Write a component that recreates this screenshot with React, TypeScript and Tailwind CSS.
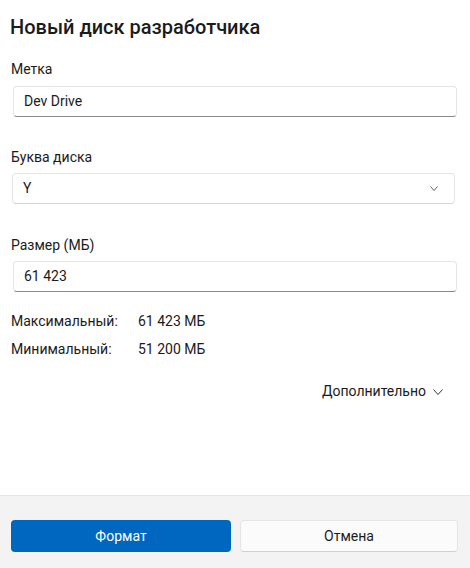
const font = { fontFamily: 'Roboto, "Noto Sans", sans-serif' };

const Chevron = ({ w, h, className }: { w: number; h: number; className?: string }) => (
  <svg width={w} height={h} viewBox={`0 0 ${w} ${h}`} fill="none" className={className}>
    <polyline points={`0.5,0.5 ${w / 2},${h - 0.5} ${w - 0.5},0.5`} stroke="currentColor" strokeWidth="1" />
  </svg>
);

const TextBox = ({ value }: { value: string }) => (
  <div className="ml-[13px] flex h-[31px] w-[444px] items-center rounded-[4px] border border-[#e5e5e5] border-b-[#8a8a8a] bg-white px-[10px] text-[14px] text-[#1b1b1b]">
    {value}
  </div>
);

const App = () => {
  return (
    <div style={font} className="flex h-[568px] w-[470px] flex-col bg-white text-[#1b1b1b]">
      <div className="flex flex-1 flex-col pt-[13px]">
        <h1 className="ml-[10px] text-[20px] font-medium leading-[28px]">Новый диск разработчика</h1>

        <div className="ml-[11px] mt-[18px] text-[14px] leading-[20px]">Метка</div>
        <div className="mt-[7px]">
          <TextBox value="Dev Drive" />
        </div>

        <div className="ml-[11px] mt-[30px] text-[14px] leading-[20px]">Буква диска</div>
        <div className="ml-[12px] mt-[6px] flex h-[31px] w-[443px] items-center justify-between rounded-[4px] border border-[#e5e5e5] border-b-[#d4d4d4] bg-white pl-[10px] pr-[16px] text-[14px]">
          <span>Y</span>
          <Chevron w={8} h={5} className="text-[#606060]" />
        </div>

        <div className="ml-[11px] mt-[31px] text-[14px] leading-[20px]">Размер (МБ)</div>
        <div className="mt-[6px]">
          <TextBox value="61 423" />
        </div>

        <div className="ml-[11px] mt-[19px] grid grid-cols-[127px_1fr] gap-y-[8px] text-[14px] leading-[20px]">
          <span>Максимальный:</span>
          <span>61 423 МБ</span>
          <span>Минимальный:</span>
          <span>51 200 МБ</span>
        </div>

        <div className="mr-[27px] mt-[22px] flex items-center justify-end gap-[7px] text-[14px] leading-[20px]">
          <span>Дополнительно</span>
          <Chevron w={10} h={6} className="mt-[1px] text-[#333]" />
        </div>
      </div>

      <div className="flex h-[73px] gap-[9px] border-t border-[#e5e5e5] bg-[#f3f3f3] pl-[11px] pr-[12px] pt-[24px]">
        <button className="flex h-[32px] w-[220px] items-center justify-center rounded-[4px] bg-[#0067c0] text-[14px] text-white">
          Формат
        </button>
        <button className="flex h-[32px] flex-1 items-center justify-center rounded-[4px] border border-[#e5e5e5] border-b-[#d0d0d0] bg-[#fbfbfb] text-[14px] text-[#1b1b1b]">
          Отмена
        </button>
      </div>
    </div>
  );
};

export default App;
